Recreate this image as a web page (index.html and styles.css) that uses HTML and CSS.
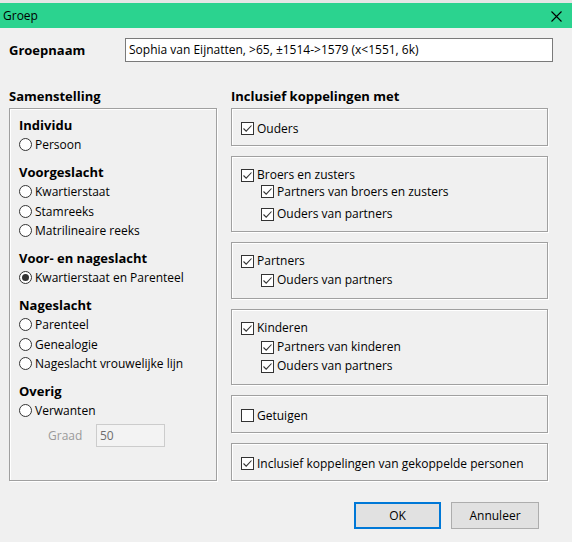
FILE: index.html
```html
<!DOCTYPE html>
<html lang="nl">
<head>
<meta charset="utf-8">
<title>Groep</title>
<link rel="stylesheet" href="styles.css">
</head>
<body>
<div class="topstrip"></div>
<div class="titlebar">
  <span class="title">Groep</span>
  <svg class="close" width="11" height="11" viewBox="0 0 11 11"><path d="M0.5 0.5 L10.5 10.5 M10.5 0.5 L0.5 10.5" stroke="#000" stroke-width="1.1" fill="none"/></svg>
</div>

<div class="name-row">
  <label class="name-label">Groepnaam</label>
  <div class="name-input">Sophia van Eijnatten, &gt;65, ±1514-&gt;1579 (x&lt;1551, 6k)</div>
</div>

<div class="columns">
  <div class="col-left">
    <div class="col-head">Samenstelling</div>
    <div class="groupbox left-box">
      <div class="sect">
        <div class="sect-head">Individu</div>
        <div class="radio-row"><span class="radio"></span>Persoon</div>
      </div>
      <div class="sect">
        <div class="sect-head">Voorgeslacht</div>
        <div class="radio-row"><span class="radio"></span>Kwartierstaat</div>
        <div class="radio-row"><span class="radio"></span>Stamreeks</div>
        <div class="radio-row"><span class="radio"></span>Matrilineaire reeks</div>
      </div>
      <div class="sect">
        <div class="sect-head">Voor- en nageslacht</div>
        <div class="radio-row"><span class="radio checked"></span>Kwartierstaat en Parenteel</div>
      </div>
      <div class="sect">
        <div class="sect-head">Nageslacht</div>
        <div class="radio-row"><span class="radio"></span>Parenteel</div>
        <div class="radio-row"><span class="radio"></span>Genealogie</div>
        <div class="radio-row"><span class="radio"></span>Nageslacht vrouwelijke lijn</div>
      </div>
      <div class="sect">
        <div class="sect-head">Overig</div>
        <div class="radio-row"><span class="radio"></span>Verwanten</div>
        <div class="graad-row">
          <span class="graad-label">Graad</span>
          <span class="graad-input">50</span>
        </div>
      </div>
    </div>
  </div>

  <div class="col-right">
    <div class="col-head">Inclusief koppelingen met</div>
    <div class="box-stack">
      <div class="groupbox rbox h38">
        <div class="chk-row"><span class="chk on"><svg viewBox="0 0 11 11"><path d="M1.5 5.5 L4.2 8.2 L9.5 2.5" /></svg></span>Ouders</div>
      </div>
      <div class="groupbox rbox h76 compact">
        <div class="chk-row"><span class="chk on"><svg viewBox="0 0 11 11"><path d="M1.5 5.5 L4.2 8.2 L9.5 2.5" /></svg></span>Broers en zusters</div>
        <div class="chk-row sub"><span class="chk on"><svg viewBox="0 0 11 11"><path d="M1.5 5.5 L4.2 8.2 L9.5 2.5" /></svg></span>Partners van broers en zusters</div>
        <div class="chk-row sub down"><span class="chk on"><svg viewBox="0 0 11 11"><path d="M1.5 5.5 L4.2 8.2 L9.5 2.5" /></svg></span>Ouders van partners</div>
      </div>
      <div class="groupbox rbox h57 tight">
        <div class="chk-row"><span class="chk on"><svg viewBox="0 0 11 11"><path d="M1.5 5.5 L4.2 8.2 L9.5 2.5" /></svg></span>Partners</div>
        <div class="chk-row sub"><span class="chk on"><svg viewBox="0 0 11 11"><path d="M1.5 5.5 L4.2 8.2 L9.5 2.5" /></svg></span>Ouders van partners</div>
      </div>
      <div class="groupbox rbox h76 tight">
        <div class="chk-row"><span class="chk on"><svg viewBox="0 0 11 11"><path d="M1.5 5.5 L4.2 8.2 L9.5 2.5" /></svg></span>Kinderen</div>
        <div class="chk-row sub"><span class="chk on"><svg viewBox="0 0 11 11"><path d="M1.5 5.5 L4.2 8.2 L9.5 2.5" /></svg></span>Partners van kinderen</div>
        <div class="chk-row sub"><span class="chk on"><svg viewBox="0 0 11 11"><path d="M1.5 5.5 L4.2 8.2 L9.5 2.5" /></svg></span>Ouders van partners</div>
      </div>
      <div class="groupbox rbox h38">
        <div class="chk-row"><span class="chk"></span>Getuigen</div>
      </div>
      <div class="groupbox rbox h38">
        <div class="chk-row"><span class="chk on"><svg viewBox="0 0 11 11"><path d="M1.5 5.5 L4.2 8.2 L9.5 2.5" /></svg></span>Inclusief koppelingen van gekoppelde personen</div>
      </div>
    </div>
  </div>
</div>

<div class="buttons">
  <button class="btn btn-default">OK</button>
  <button class="btn">Annuleer</button>
</div>
</body>
</html>
```
FILE: styles.css
```css
html, body {
  margin: 0;
  padding: 0;
}
body {
  width: 572px;
  height: 542px;
  overflow: hidden;
  background: #f0f0f0;
  font-family: "Open Sans", "Noto Sans", sans-serif;
  font-size: 12px;
  color: #000;
}

.topstrip {
  height: 3px;
  background: #e6e6e6;
}

.titlebar {
  height: 25px;
  background: #2bd38f;
  display: flex;
  align-items: center;
  justify-content: space-between;
  padding: 0 10px 0 3px;
}
.title {
  font-size: 12px;
  line-height: 16px;
}
.close {
  display: block;
  margin-top: 1px;
}

.name-row {
  display: flex;
  align-items: center;
  margin-top: 10px;
  padding-left: 9px;
}
.name-label {
  width: 116px;
  font-weight: 700;
  font-size: 13px;
}
.name-input {
  width: 428px;
  height: 24px;
  box-sizing: border-box;
  border: 1px solid #7a7a7a;
  background: #fff;
  padding-left: 3px;
  line-height: 22px;
  white-space: nowrap;
}

.columns {
  display: flex;
  gap: 14px;
  padding-left: 9px;
  margin-top: 25px;
}
.col-left {
  width: 208px;
}
.col-right {
  width: 317px;
}
.col-head {
  font-weight: 700;
  font-size: 13px;
  line-height: 18px;
  margin-bottom: 3px;
}

.groupbox {
  box-sizing: border-box;
  border: 1px solid #a0a0a0;
  box-shadow: inset 1px 1px 0 #fff, 1px 1px 0 #fff;
}

.left-box {
  height: 373px;
  padding: 6px 9px 0 9px;
}
.sect + .sect {
  margin-top: 7.5px;
}
.sect-head {
  font-weight: 700;
  font-size: 13px;
  line-height: 20px;
}
.radio-row {
  display: flex;
  align-items: center;
  gap: 3px;
  height: 19.5px;
  white-space: nowrap;
}
.radio {
  width: 13px;
  height: 13px;
  box-sizing: border-box;
  border: 1px solid #333;
  border-radius: 50%;
  background: #fff;
  flex: none;
  display: flex;
  align-items: center;
  justify-content: center;
}
.radio.checked::after {
  content: "";
  width: 7px;
  height: 7px;
  border-radius: 50%;
  background: #333;
}
.graad-row {
  display: flex;
  align-items: center;
  margin-top: 3px;
  padding-left: 29px;
}
.graad-label {
  width: 48px;
  color: #9a9a9a;
  font-size: 12px;
}
.graad-input {
  width: 69px;
  height: 23px;
  box-sizing: border-box;
  border: 1px solid #cccccc;
  background: #f3f3f3;
  color: #6d6d6d;
  padding-left: 3px;
  line-height: 21px;
}

.box-stack {
  height: 373px;
  display: flex;
  flex-direction: column;
  justify-content: space-between;
}
.rbox {
  padding: 10px 9px 0 9px;
}
.rbox.tight {
  padding-top: 8.5px;
}
.rbox.compact {
  padding-top: 10px;
}
.h38 { height: 38px; }
.h57 { height: 57px; }
.h76 { height: 76px; }

.chk-row {
  display: flex;
  align-items: center;
  gap: 3px;
  height: 19px;
  line-height: 16px;
  white-space: nowrap;
}
.compact .chk-row {
  height: 16.5px;
  line-height: 16.5px;
}
.chk-row.sub {
  margin-left: 20px;
}
.compact .chk-row.down {
  margin-top: 6px;
}
.chk {
  width: 13px;
  height: 13px;
  box-sizing: border-box;
  border: 1px solid #333;
  background: #fff;
  flex: none;
  display: flex;
  align-items: center;
  justify-content: center;
}
.chk svg {
  width: 11px;
  height: 11px;
  display: block;
}
.chk svg path {
  fill: none;
  stroke: #333;
  stroke-width: 1.1;
}

.buttons {
  display: flex;
  justify-content: flex-end;
  gap: 10px;
  padding-right: 33px;
  margin-top: 21px;
}
.btn {
  height: 27px;
  width: 88px;
  box-sizing: border-box;
  background: #e1e1e1;
  border: 1px solid #adadad;
  font-family: "Open Sans", "Noto Sans", sans-serif;
  font-size: 12px;
  color: #000;
  padding: 0;
  margin: 0;
}
.btn-default {
  width: 87px;
  border: 2px solid #0078d7;
}
```
